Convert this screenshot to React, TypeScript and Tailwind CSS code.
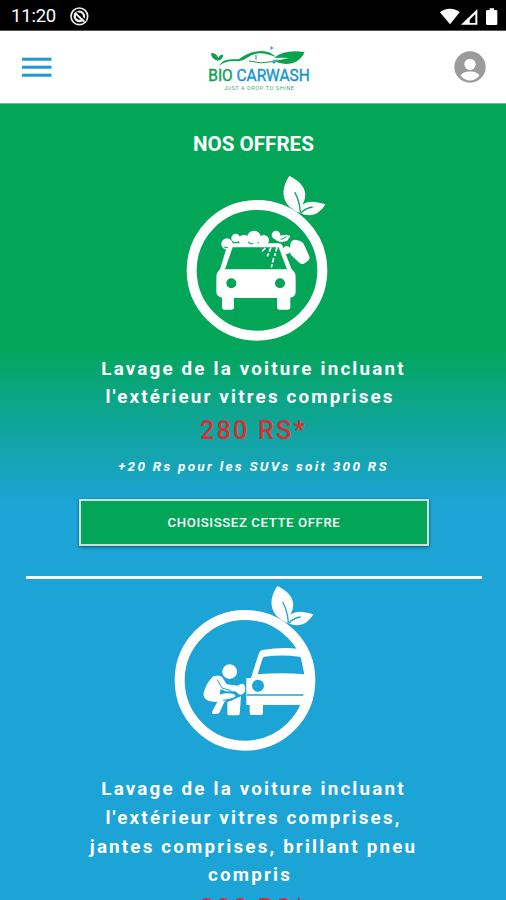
import type { ReactNode } from 'react';

interface OfferProps {
  icon: ReactNode;
  lines: string[];
  price: string;
  note?: string;
}

function StatusBar() {
  return (
    <div className="flex h-[31px] items-center justify-between border-b border-[#555] bg-black pl-[11px] pr-[8px] pt-[3px] text-white">
      <div className="flex items-center gap-[14px]">
        <span className="w-[45px] text-[18.5px] leading-none tracking-[-0.2px] whitespace-nowrap">11:20</span>
        <svg className="h-[19px] w-[19px]" viewBox="0 0 57 57" fill="none" stroke="#eee">
          <circle cx="28" cy="28" r="25" strokeWidth="5" />
          <circle cx="28" cy="28" r="14" strokeWidth="7" />
          <path d="M15 17l28 27" strokeWidth="6" />
          <path d="M20 14l28 27" stroke="#000" strokeWidth="4" />
        </svg>
      </div>
      <svg className="h-[18px] w-[58px]" viewBox="0 0 174 54" fill="#fff">
        <path d="M0 13C14-1 46-1 59 13L30 49z" />
        <path fillRule="evenodd" d="M112 3v47H63zM106 18L89 35v10h17z" />
        <path d="M143 6h6V1h13v5h6q4 0 4 4v37q0 4-4 4h-26q-4 0-4-4V10q0-4 5-4z" />
      </svg>
    </div>
  );
}

function Logo() {
  return (
    <svg className="h-[55px] w-[115px]" viewBox="0 0 345 165">
      <g fill="#0ba24f">
        <path d="M36 39q17 0 22 15q3-11 15-10q-2 15-16 18Q37 59 36 39z" />
        <path d="M60 78C70 60 85 57 119 58Q151 34 189 33q24 0 42 18l-18-6q-37-13-66 7-12 9-28 12-39-4-59 14z" />
        <path d="M226 54q26-26 91-18-16 36-57 36-18 0-33-9l43-9q-17-2-44 0z" />
      </g>
      <path d="M150 63q38 10 70 2l15-6M171 45v14" fill="none" stroke="#0ba24f" strokeWidth="3" />
      <path d="M218 17l2 5 5 2-5 2-2 5-2-5-5-2 5-2zM225 58l7 7-7 7-7-7zM203 38l3 3-3 3-3-3z" fill="#3da2d6" />
      <text x="28" y="123" textLength="304" lengthAdjust="spacingAndGlyphs" fontSize="47" strokeWidth="1.2" className="font-['Roboto',sans-serif]">
        <tspan fill="#0ba24f" stroke="#0ba24f">BIO </tspan>
        <tspan fill="#1595d0" stroke="#1595d0">CARWASH</tspan>
      </text>
      <text x="74" y="149" textLength="211" fontSize="17" fill="#4ab07b" className="font-['Roboto',sans-serif]">JUST A DROP TO SHINE</text>
    </svg>
  );
}

function Header() {
  return (
    <header className="flex h-[73px] items-center justify-between border-b border-[#77b793] bg-white pl-[22px] pr-[20px]">
      <svg className="h-5 w-[30px]" viewBox="0 0 30 20" fill="#1f9ad0">
        <rect y="0.7" width="29.5" height="3" />
        <rect y="8.7" width="29.5" height="3" />
        <rect y="16.7" width="29.5" height="3" />
      </svg>
      <div className="ml-[7px]">
        <Logo />
      </div>
      <svg className="h-8 w-8" viewBox="0 0 96 96">
        <circle cx="48" cy="48" r="47" fill="#9b9b9b" />
        <circle cx="48" cy="40" r="17" fill="#fff" />
        <path d="M20 74c5-17 51-17 56 0-15 19-41 19-56 0z" fill="#fff" />
      </svg>
    </header>
  );
}

// Ring with the two leaves, shared by every offer icon
function LeafRing({ cut }: { cut: string }) {
  return (
    <>
      <circle cx="231" cy="301" r="196" fill="none" stroke="#fff" strokeWidth="30" />
      <path d="M361 130C298 105 303 55 328 18C371 38 388 70 367 104Q389 87 436 103C416 137 389 142 361 130z" fill="#fff" />
      <path d="M344 66q15 28 17 62M362 130q14-16 36-19" fill="none" stroke={cut} strokeWidth="4" />
    </>
  );
}

function FoamCarIcon() {
  return (
    <svg className="h-[175px] w-[155px]" viewBox="0 0 465 525">
      <LeafRing cut="#02a656" />
      <g fill="#fff">
        <circle cx="141" cy="222" r="17" />
        <circle cx="167" cy="204" r="13" />
        <circle cx="192" cy="210" r="16" />
        <circle cx="222" cy="202" r="20" />
        <circle cx="251" cy="211" r="16" />
        <circle cx="288" cy="195" r="13" />
        <circle cx="319" cy="240" r="12" />
        <path d="M297 197l22-3 12 4-10 15-20 4-16-8z" />
        <path d="M331 221q2-10 14-12l16 4q10 4 13 15l14 31q3 8-5 14l-11 8q-7 3-13-2l-23-21q-8-8-6-20z" />
        <path
          fillRule="evenodd"
          d="M149 220h148q8 0 11 8l27 70q12 9 12 24v43q0 15-16 18v29q0 7-7 7h-27q-6 0-6-7v-28H162v28q0 7-7 7h-23q-6 0-6-7v-29q-17-4-17-18v-43q0-15 11-24l21-69q2-9 8-9zM158 232l-23 66h186l-25-66zM154 325a15 15 0 100 30 15 15 0 000-30zM300 325a15 15 0 100 30 15 15 0 000-30z"
        />
      </g>
      <path d="M256 234l-14 14M273 232l-11 27M291 231l-7 27M281 264l-7 28" fill="none" stroke="#fff" strokeWidth="5" strokeDasharray="14 5" />
      <path d="M302 209l18-9M131 231l13 2M205 216q6 8 15 5M309 233l6-5" fill="none" stroke="#02a656" strokeWidth="3" />
    </svg>
  );
}

function WheelWashIcon() {
  return (
    <svg className="h-[175px] w-[160px]" viewBox="0 0 480 525">
      <g transform="translate(9 3)">
        <LeafRing cut="#1ca4d6" />
      </g>
      <g fill="#fff">
        <circle cx="194" cy="278" r="22" />
        {/* crouching washer and bucket */}
        <path d="M148 292q13-6 23 2l14 22 34 4q11-10 19-3 5 8 1 22-8 12-17 7l-11-9-30 0-14-7-3 17q22-7 41-2 8 3 5 9l-20 7q-10 2-13 10l-13 29q-3 5-9 5h-11q-5-2-2-8l15-29q-26 0-32-6-11-6-9-21 8-31 30-51z" />
        <path d="M187 369q15-4 23-10l18-7-4 52q0 5-6 5h-26q-5 0-5-5z" />
        <path
          fillRule="evenodd"
          d="M244 297h14l23-73q3-9 11-11 54-9 106-4l34 60v84H244zM299 233q-4 0-6 5l-15 48q70-7 140 0l-10-48q-1-5-6-5-51-7-103 0zM279 302a18 18 0 100 36 18 18 0 000-36z"
        />
        <path d="M244 344h180v34H294v24q0 6-6 6h-28q-6 0-6-6v-24h-10z" />
      </g>
      <path d="M244 348h171" stroke="#1ca4d6" strokeWidth="4" />
      <path d="M157 302l14 25 28 8M174 364l34-5" fill="none" stroke="#1ca4d6" strokeWidth="3" />
    </svg>
  );
}

function Offer({ icon, lines, price, note }: OfferProps) {
  return (
    <section className="flex flex-col items-center pl-px">
      {icon}
      <div className="text-center text-[18.8px] font-bold leading-[28.8px] tracking-[2.18px]">
        {lines.map((line) => (
          <p key={line} className="whitespace-pre">{line}</p>
        ))}
      </div>
      <p className="mt-[2px] h-[34px] text-[25.2px] leading-[34px] font-medium tracking-[2.2px] text-[#dc2d2e]">{price}</p>
      {note && <p className="mt-[7.4px] text-[13.5px] leading-[20px] font-bold italic tracking-[2.28px]">{note}</p>}
    </section>
  );
}

export default function App() {
  return (
    <div className="h-[900px] w-[506px] overflow-hidden bg-white font-['Roboto','Liberation_Sans',sans-serif]">
      <StatusBar />
      <Header />
      <main className="h-[796px] overflow-hidden bg-[linear-gradient(180deg,#02a656_0px,#02a656_235px,#1ca4d6_400px,#1ca4d6_100%)] pt-[26px] text-white">
        <h1 className="h-[40px] pl-px text-center text-[20.6px] leading-[29px] font-bold">NOS OFFRES</h1>
        <Offer
          icon={<div className="mb-[9.6px] ml-[8px]"><FoamCarIcon /></div>}
          lines={['Lavage de la voiture incluant', "l'extérieur vitres comprises "]}
          price="280 RS*"
          note="+20 Rs pour les SUVs soit 300 RS"
        />
        <button className="mx-auto mt-[23.4px] block h-[47px] w-[350px] translate-x-px border-2 border-[#c8e2d8] bg-[#02a656] text-[13.2px] font-medium tracking-[0.6px] shadow-[0_1px_3px_rgba(0,0,0,0.5)]">
          CHOISISSEZ CETTE OFFRE
        </button>
        <div className="mt-[30px] mr-[24px] ml-[26px] h-[3px] bg-white" />
        <Offer
          icon={<div className="mb-[21px] mr-[17px]"><WheelWashIcon /></div>}
          lines={[
            'Lavage de la voiture incluant',
            "l'extérieur vitres comprises,",
            'jantes comprises, brillant pneu',
            'compris ',
          ]}
          price="380 RS*"
        />
      </main>
    </div>
  );
}
